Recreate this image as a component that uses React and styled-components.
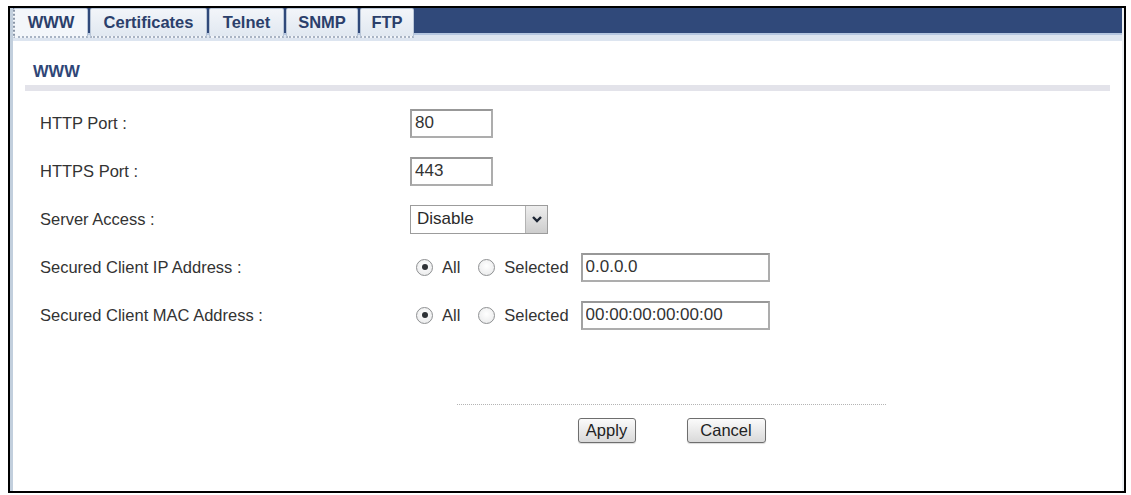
import React from "react";
import styled, { createGlobalStyle } from "styled-components";

const GlobalStyle = createGlobalStyle`
  body {
    margin: 0;
    background: #ffffff;
    font-family: "Liberation Sans", Arial, sans-serif;
  }
`;

const tabs = [
  { name: "WWW", width: 75 },
  { name: "Certificates", width: 117 },
  { name: "Telnet", width: 75 },
  { name: "SNMP", width: 72 },
  { name: "FTP", width: 54 },
];

export default function App() {
  return (
    <>
      <GlobalStyle />
      <Frame>
        <Inner>
          <TabHeader>
            {tabs.map((t) => (
              <Tab key={t.name} $width={t.width} $active={t.name === "WWW"}>
                {t.name}
              </Tab>
            ))}
          </TabHeader>
          <Content>
            <SectionTitle>WWW</SectionTitle>
            <TitleRule />

            <FormRow>
              <Label>HTTP Port :</Label>
              <Control>
                <TextBox $width={83} defaultValue="80" />
              </Control>
            </FormRow>
            <FormRow>
              <Label>HTTPS Port :</Label>
              <Control>
                <TextBox $width={83} defaultValue="443" />
              </Control>
            </FormRow>
            <FormRow>
              <Label>Server Access :</Label>
              <Control>
                <SelectBox>
                  <SelectValue>Disable</SelectValue>
                  <SelectArrow>
                    <svg width="12" height="10" viewBox="0 0 12 10">
                      <path
                        d="M2 3 L6 7 L10 3"
                        fill="none"
                        stroke="#1c2534"
                        strokeWidth="2.4"
                      />
                    </svg>
                  </SelectArrow>
                </SelectBox>
              </Control>
            </FormRow>
            <FormRow>
              <Label>Secured Client IP Address :</Label>
              <Control>
                <RadioOption>
                  <RadioDot $checked />
                  <RadioLabel>All</RadioLabel>
                </RadioOption>
                <RadioOption>
                  <RadioDot />
                  <RadioLabel>Selected</RadioLabel>
                </RadioOption>
                <TextBox $width={189} defaultValue="0.0.0.0" />
              </Control>
            </FormRow>
            <FormRow>
              <Label>Secured Client MAC Address :</Label>
              <Control>
                <RadioOption>
                  <RadioDot $checked />
                  <RadioLabel>All</RadioLabel>
                </RadioOption>
                <RadioOption>
                  <RadioDot />
                  <RadioLabel>Selected</RadioLabel>
                </RadioOption>
                <TextBox $width={189} defaultValue="00:00:00:00:00:00" />
              </Control>
            </FormRow>

            <Footer>
              <Button $width={58}>Apply</Button>
              <Button $width={79}>Cancel</Button>
            </Footer>
          </Content>
        </Inner>
      </Frame>
    </>
  );
}

const Frame = styled.div`
  box-sizing: border-box;
  margin: 6px 0 0 8px;
  width: 1118px;
  height: 487px;
  border: 2px solid #000000;
  background: #ffffff;
`;

const Inner = styled.div`
  height: 100%;
  display: flex;
  flex-direction: column;
  border-left: 3px solid #c2cfdd;
  border-right: 2px solid #edf0f3;
`;

const TabHeader = styled.div`
  display: flex;
  gap: 2px;
  height: 33px;
  align-items: flex-start;
  background: linear-gradient(
    to bottom,
    #30497a 0,
    #30497a 25px,
    #b4c6e0 25px,
    #b4c6e0 27px,
    #dde5f0 27px
  );
`;

const Tab = styled.div`
  box-sizing: border-box;
  width: ${(p) => p.$width}px;
  height: 30px;
  display: flex;
  align-items: center;
  justify-content: center;
  font-size: 16.5px;
  font-weight: bold;
  color: #2b3f6b;
  background: ${(p) =>
    p.$active
      ? "#f3f6fa"
      : "linear-gradient(to bottom, #f2f5f9, #e1e8f1)"};
  border: 1px solid #b9c6d8;
  border-left: ${(p) => (p.$active ? "2px dotted #8a96a8" : "1px solid #b9c6d8")};
  border-bottom: 2px dotted #a9b4c4;
  border-radius: 2px 2px 0 0;
`;

const Content = styled.div`
  flex: 1;
  display: flex;
  flex-direction: column;
  padding-top: 20px;
`;

const SectionTitle = styled.div`
  padding-left: 20px;
  line-height: 20px;
  font-size: 16.5px;
  font-weight: bold;
  color: #2f4677;
`;

const TitleRule = styled.div`
  height: 6px;
  margin: 4px 12px 8px 12px;
  background: #e3e3ea;
`;

const FormRow = styled.div`
  display: grid;
  grid-template-columns: 370px 1fr;
  align-items: center;
  height: 48px;
  padding-left: 27px;
`;

const Label = styled.div`
  font-size: 16.5px;
  color: #333333;
`;

const Control = styled.div`
  display: flex;
  align-items: center;
`;

const TextBox = styled.input.attrs({ readOnly: true })`
  box-sizing: border-box;
  width: ${(p) => p.$width}px;
  height: 29px;
  padding: 0 3px;
  margin: 0;
  border: 2px solid #adadad;
  border-top-color: #989898;
  border-left-color: #a2a2a2;
  font-family: "Liberation Sans", Arial, sans-serif;
  font-size: 17px;
  color: #333333;
  background: #ffffff;
  outline: none;
`;

const SelectBox = styled.div`
  box-sizing: border-box;
  width: 138px;
  height: 29px;
  display: flex;
  border: 1px solid #9c9c9c;
  background: #ffffff;
`;

const SelectValue = styled.div`
  flex: 1;
  display: flex;
  align-items: center;
  padding-left: 6px;
  font-size: 17px;
  color: #2a2a2a;
`;

const SelectArrow = styled.div`
  width: 21px;
  display: flex;
  align-items: center;
  justify-content: center;
  background: linear-gradient(to bottom, #eeeeee, #cdcdcd);
  border-left: 1px solid #b3b3b3;
`;

const RadioOption = styled.div`
  display: flex;
  align-items: center;
  gap: 9px;
  margin-left: 6px;
  margin-right: 18px;

  &:nth-child(2) {
    margin-left: 0;
    margin-right: 12px;
  }
`;

const RadioDot = styled.span`
  box-sizing: border-box;
  width: 17px;
  height: 17px;
  border-radius: 50%;
  border: 1px solid #8e9092;
  background: radial-gradient(circle at 50% 40%, #ffffff 0, #e6e7e8 100%);
  display: flex;
  align-items: center;
  justify-content: center;

  &::after {
    content: "";
    width: 6px;
    height: 6px;
    border-radius: 50%;
    background: #2e3236;
    display: ${(p) => (p.$checked ? "block" : "none")};
  }
`;

const RadioLabel = styled.span`
  font-size: 16.5px;
  color: #333333;
`;

const Footer = styled.div`
  box-sizing: border-box;
  width: 429px;
  margin: 65px 0 0 444px;
  padding-top: 13px;
  border-top: 1px dotted #b4b4b4;
  display: flex;
  justify-content: center;
  gap: 51px;
`;

const Button = styled.div`
  box-sizing: border-box;
  width: ${(p) => p.$width}px;
  height: 25px;
  display: flex;
  align-items: center;
  justify-content: center;
  font-size: 16.5px;
  color: #222222;
  background: linear-gradient(to bottom, #fbfbfb, #d9d9d9);
  border: 1px solid #6e6e6e;
  border-radius: 3px;
  box-shadow: 0 1px 1px rgba(0, 0, 0, 0.15);
`;
